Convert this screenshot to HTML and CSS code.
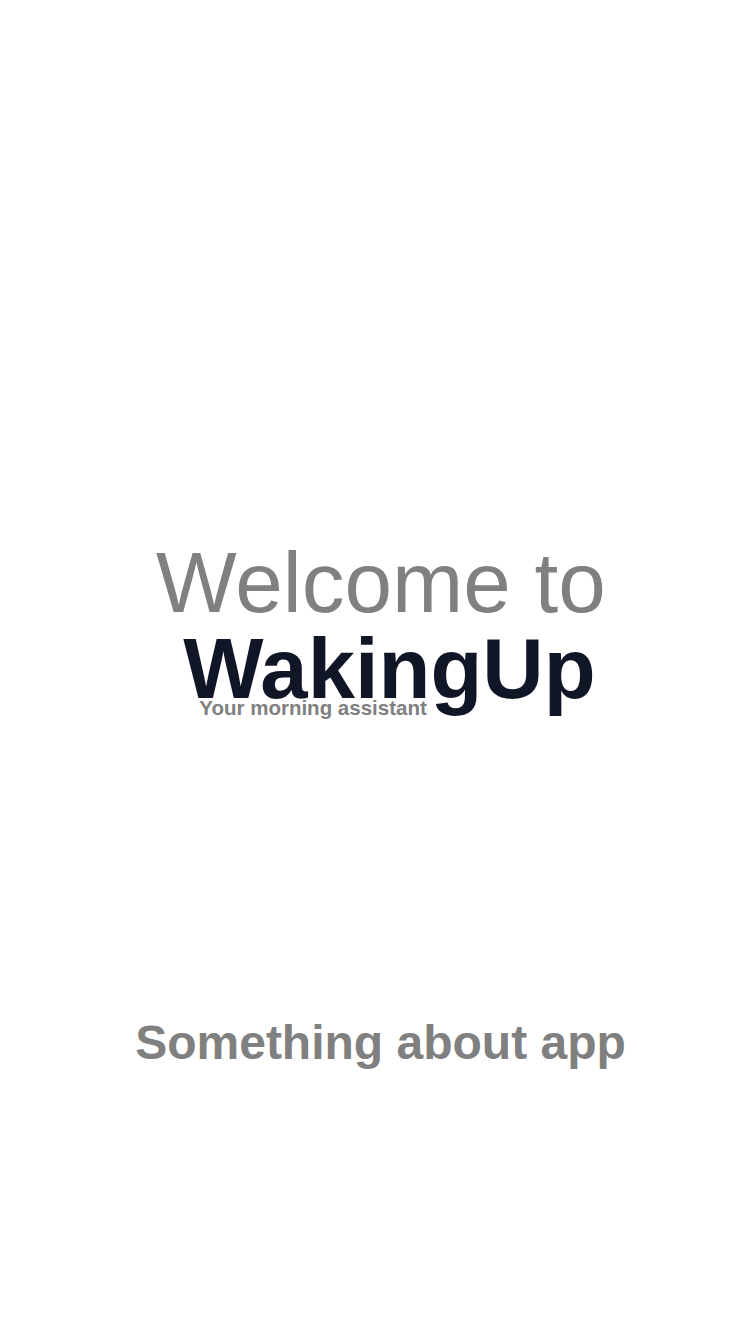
FILE: index.html
```html
<!DOCTYPE html>
<html lang="en">
<head>
<meta charset="utf-8">
<title>WakingUp</title>
<link rel="stylesheet" href="styles.css">
</head>
<body>
<main class="screen">
  <section class="welcome">
    <h1 class="welcome-title">Welcome to</h1>
    <div class="brand">
      <div class="brand-name">WakingUp</div>
      <div class="brand-tagline">Your morning assistant</div>
    </div>
  </section>
  <p class="about">Something about app</p>
</main>
</body>
</html>
```

FILE: styles.css
```css
html, body {
  margin: 0;
  padding: 0;
  background: #ffffff;
}

.screen {
  width: 750px;
  height: 1334px;
  display: flex;
  flex-direction: column;
  align-items: center;
  padding-top: 540px;
  box-sizing: border-box;
  font-family: "Liberation Sans", Arial, Helvetica, sans-serif;
}

.welcome {
  display: flex;
  flex-direction: column;
  align-items: center;
  padding-left: 12px;
}

.welcome-title {
  margin: 0;
  font-size: 85.5px;
  line-height: 85px;
  font-weight: 400;
  color: #808080;
}

.brand {
  margin-top: 1px;
  display: flex;
  flex-direction: column;
  align-items: flex-start;
  padding-left: 17px;
}

.brand-name {
  font-size: 85px;
  line-height: 85px;
  font-weight: 700;
  color: #101626;
}

.brand-tagline {
  margin-top: -13px;
  margin-left: 16px;
  font-size: 20.5px;
  line-height: 20px;
  font-weight: 700;
  color: #808080;
}

.about {
  margin: 301px 0 0 0;
  padding-left: 11px;
  font-size: 48px;
  line-height: 48px;
  font-weight: 700;
  color: #808080;
}
```
